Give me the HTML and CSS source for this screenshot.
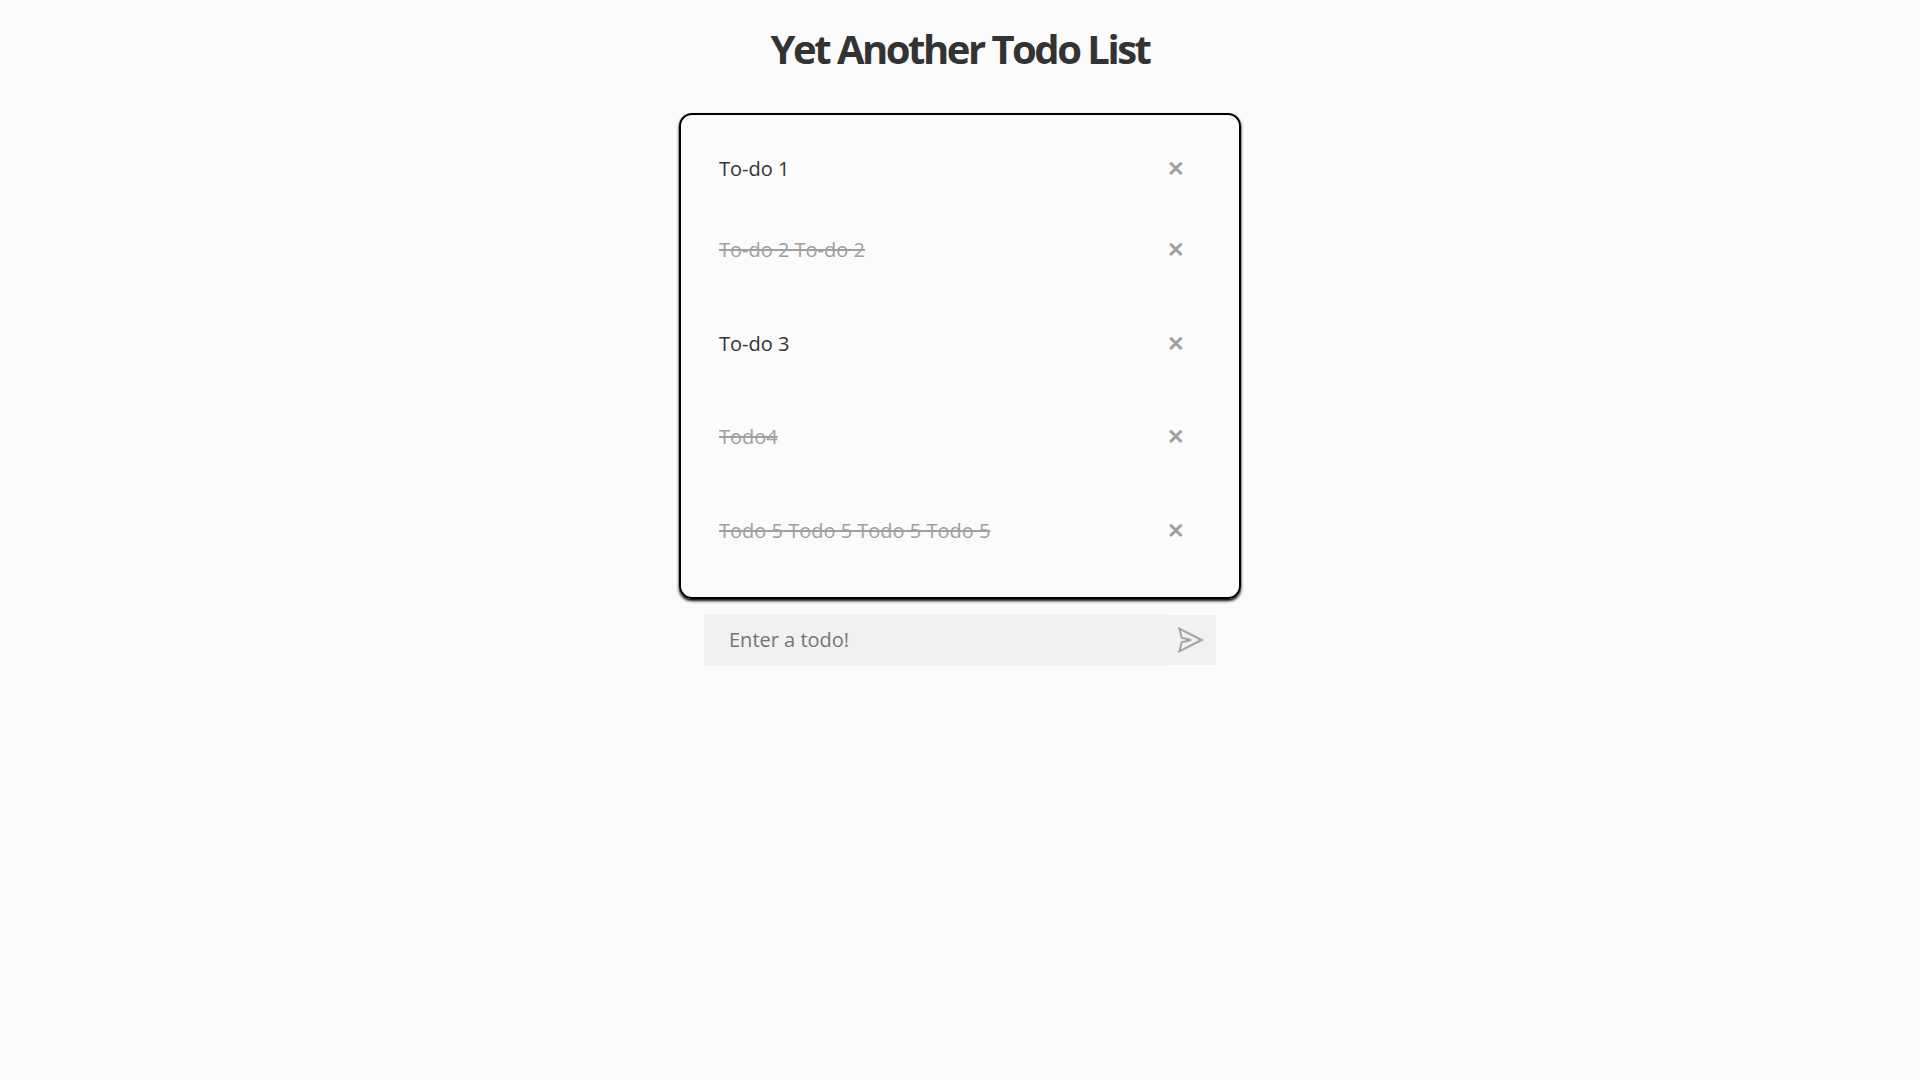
FILE: index.html
```html
<!DOCTYPE html>
<html lang="en">
<head>
<meta charset="utf-8">
<title>Yet Another Todo List</title>
<link rel="stylesheet" href="styles.css">
</head>
<body>
<main class="app">
  <h1 class="title">Yet Another Todo List</h1>
  <ul class="list">
    <li class="item"><span class="text">To-do 1</span><button class="remove" aria-label="Remove">✕</button></li>
    <li class="item second"><span class="text done">To-do 2 To-do 2</span><button class="remove" aria-label="Remove">✕</button></li>
    <li class="item"><span class="text">To-do 3</span><button class="remove" aria-label="Remove">✕</button></li>
    <li class="item"><span class="text done">Todo4</span><button class="remove" aria-label="Remove">✕</button></li>
    <li class="item"><span class="text done">Todo 5 Todo 5 Todo 5 Todo 5</span><button class="remove" aria-label="Remove">✕</button></li>
  </ul>
  <form class="entry">
    <input class="field" type="text" placeholder="Enter a todo!">
    <button class="send" type="button" aria-label="Add">
      <svg width="26" height="26" viewBox="0 0 26 26" fill="none" stroke="#a3a3a3" stroke-width="2"><path d="M1.4 1.7L23.7 13L1.4 24.3L3.7 15.3L13 13L3.7 10.7Z"/></svg>
    </button>
  </form>
</main>
</body>
</html>
```
FILE: styles.css
```css
* { box-sizing: border-box; }
body {
  margin: 0;
  background: #fbfbfb;
  color: #333;
  font-family: "Open Sans", sans-serif;
  font-size: 20px;
}
.app {
  display: flex;
  flex-direction: column;
  align-items: center;
}
.title {
  margin: 22px 0 37px;
  font-size: 40px;
  line-height: 54px;
  font-weight: 700;
  letter-spacing: -2.5px;
}
.list {
  width: 562px;
  height: 486px;
  margin: 0;
  padding: 7px 38px 0;
  list-style: none;
  border: 2px solid #000;
  border-radius: 13px;
  box-shadow: 0 2px 3px #000;
}
.item {
  display: flex;
  align-items: center;
  justify-content: space-between;
  height: 93.6px;
  padding-right: 20px;
}
.second {
  height: 68px;
  margin-bottom: 13px;
}
.done {
  color: #a0a0a0;
  text-decoration: line-through 2px;
}
.remove {
  width: 14px;
  padding: 0;
  border: 0;
  background: none;
  color: #a0a0a0;
  font: 700 21px/27px "Open Sans", sans-serif;
}
.entry {
  display: flex;
  align-items: center;
  margin-top: 15px;
}
.field {
  width: 462px;
  height: 52px;
  padding: 0 25px 1px;
  border: 0;
  background: #f1f1f1;
  font: 20px "Open Sans", sans-serif;
}
.field::placeholder { color: #757575; }
.send {
  display: flex;
  align-items: center;
  justify-content: center;
  width: 50px;
  height: 50px;
  padding: 0;
  border: 0;
  background: #f1f1f1;
}
```
